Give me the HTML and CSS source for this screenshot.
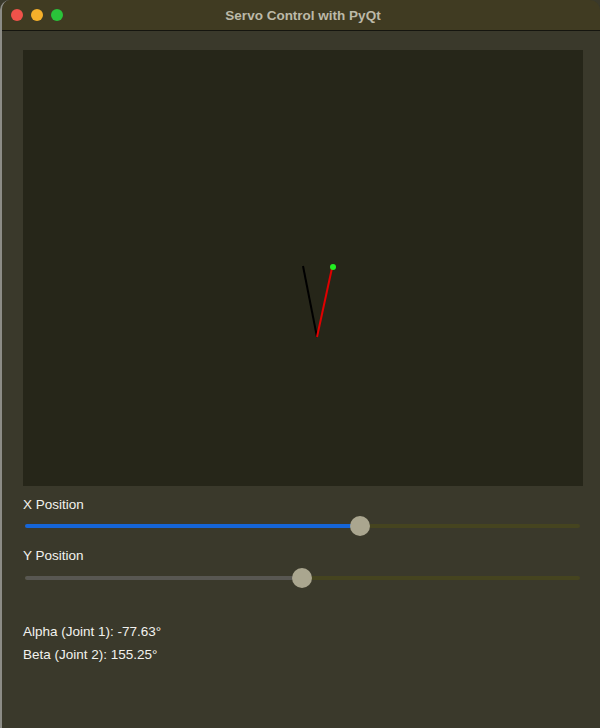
FILE: index.html
```html
<!DOCTYPE html>
<html>
<head>
<meta charset="utf-8">
<link rel="stylesheet" href="styles.css">
</head>
<body>
<div class="window">
  <div class="titlebar">
    <div class="lights">
      <span class="light red"></span>
      <span class="light yellow"></span>
      <span class="light green"></span>
    </div>
    <div class="title">Servo Control with PyQt</div>
  </div>
  <div class="content">
    <div class="canvas">
      <svg width="560" height="436" viewBox="0 0 560 436">
        <line x1="280" y1="216" x2="294" y2="287" stroke="#000" stroke-width="2"/>
        <line x1="294" y1="287" x2="309" y2="218" stroke="#e00000" stroke-width="2"/>
        <circle cx="310" cy="217" r="3" fill="#22ee22"/>
      </svg>
    </div>
    <div class="label label-x">X Position</div>
    <div class="slider">
      <div class="track"></div>
      <div class="fill fill-blue" style="width:337px"></div>
      <div class="handle" style="left:327px"></div>
    </div>
    <div class="label label-y">Y Position</div>
    <div class="slider slider-y">
      <div class="track"></div>
      <div class="fill fill-grey" style="width:279px"></div>
      <div class="handle" style="left:269px"></div>
    </div>
    <div class="readout readout-alpha">Alpha (Joint 1): -77.63°</div>
    <div class="readout readout-beta">Beta (Joint 2): 155.25°</div>
  </div>
</div>
</body>
</html>
```
FILE: styles.css
```css
html, body {
  margin: 0;
  padding: 0;
  background: #3a392b;
}
body {
  font-family: "Liberation Sans", Arial, sans-serif;
  font-size: 13.5px;
  color: #f2f2ee;
}
.window {
  width: 600px;
  height: 728px;
  box-sizing: border-box;
  border-left: 2px solid #8c8c86;
  border-top-left-radius: 10px;
  border-top-right-radius: 10px;
  background: #3a392b;
  overflow: hidden;
}
.titlebar {
  height: 30px;
  background: #403b22;
  border-bottom: 1px solid #15150f;
  display: flex;
  align-items: center;
  position: relative;
}
.lights {
  display: flex;
  gap: 8px;
  padding-left: 9px;
}
.light {
  width: 12px;
  height: 12px;
  border-radius: 50%;
  display: block;
}
.red { background: #f0524a; }
.yellow { background: #f6b02a; }
.green { background: #2ac33a; }
.title {
  flex: 1;
  text-align: center;
  font-weight: bold;
  font-size: 13.5px;
  color: #bcb9a8;
  margin-right: 57px;
}
.content {
  display: flex;
  flex-direction: column;
  padding: 19px 0 0 21px;
}
.canvas {
  width: 560px;
  height: 436px;
  background: #262619;
}
.canvas svg { display: block; }
.label {
  line-height: 16px;
  height: 16px;
}
.label-x { margin-top: 11px; }
.label-y { margin-top: 12px; }
.slider {
  position: relative;
  width: 557px;
  height: 20px;
  margin-top: 3px;
}
.slider-y { margin-top: 4px; }
.track {
  position: absolute;
  left: 2px;
  right: 0;
  top: 8px;
  height: 4px;
  border-radius: 2px;
  background: #45441f;
}
.fill {
  position: absolute;
  left: 2px;
  top: 8px;
  height: 4px;
  border-radius: 2px;
}
.fill-blue { background: #1565d8; }
.fill-grey { background: #585752; }
.handle {
  position: absolute;
  top: 0;
  width: 20px;
  height: 20px;
  border-radius: 50%;
  background: #aaa68f;
}
.readout {
  line-height: 16px;
  height: 16px;
}
.readout-alpha { margin-top: 36px; }
.readout-beta { margin-top: 7px; }
```
